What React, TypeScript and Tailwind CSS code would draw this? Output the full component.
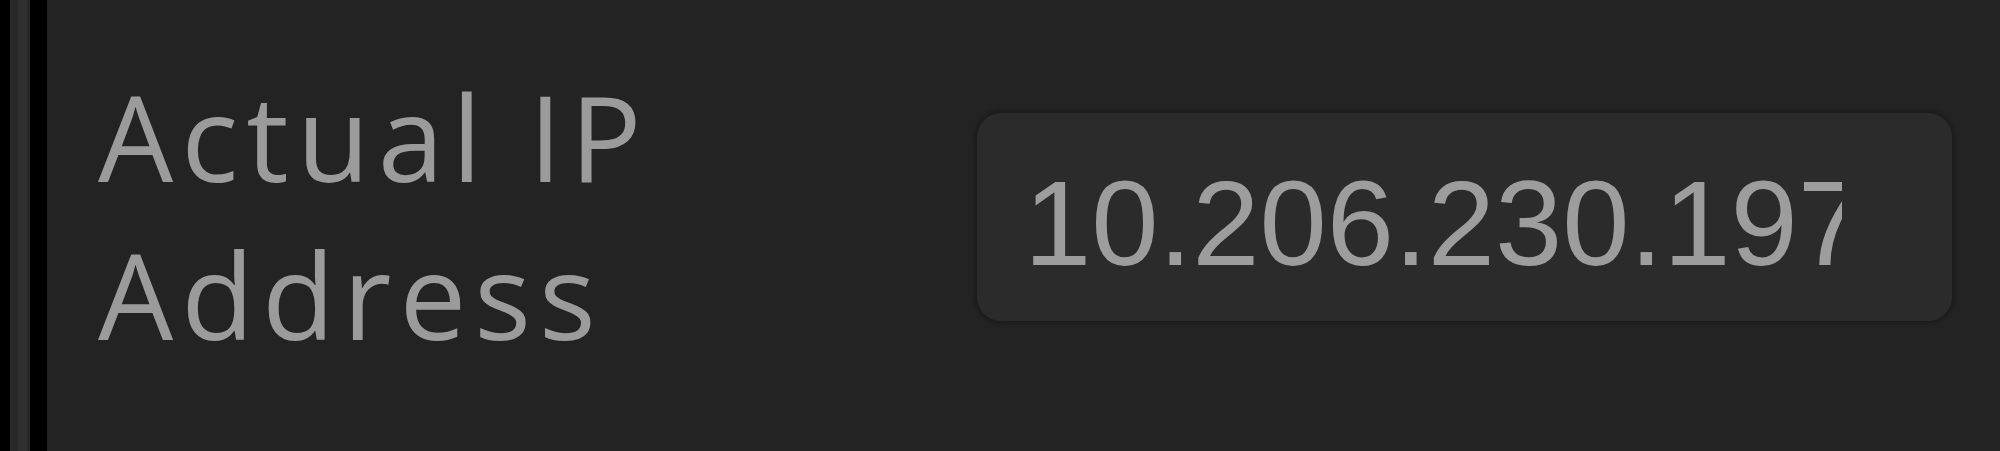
import React from 'react';

const App = () => {
  return (
    <div className="flex h-[451px] w-[2000px] bg-black">
      {/* window edge */}
      <div className="w-[10px] bg-black" />
      <div className="flex w-[20px]">
        <div className="w-[8px] bg-[#282828]" />
        <div className="w-[9px] bg-[#2f2f2f]" />
        <div className="w-[3px] bg-[#282828]" />
      </div>
      <div className="w-[17px] bg-black" />

      <div className="flex flex-1 bg-[#232323]">
        <div className="w-[930px] pl-[51px] pt-[57px]">
          <div className="font-['Open_Sans',sans-serif] text-[119px] leading-[158px] tracking-[8px] text-[#9b9b9b] whitespace-nowrap">
            <div>Actual IP</div>
            <div>Address</div>
          </div>
        </div>

        <div className="mt-[113px] h-[208px] w-[975px] rounded-[24px] bg-[#2b2b2b] pt-[50px] pl-[47px] shadow-[0_0_3px_3px_#1d1d1d]">
          <div className="w-[818px] overflow-hidden whitespace-nowrap font-['Liberation_Sans',Arial,sans-serif] text-[121px] leading-none text-[#9d9d9d]">
            10.206.230.197
          </div>
        </div>
      </div>
    </div>
  );
};

export default App;
